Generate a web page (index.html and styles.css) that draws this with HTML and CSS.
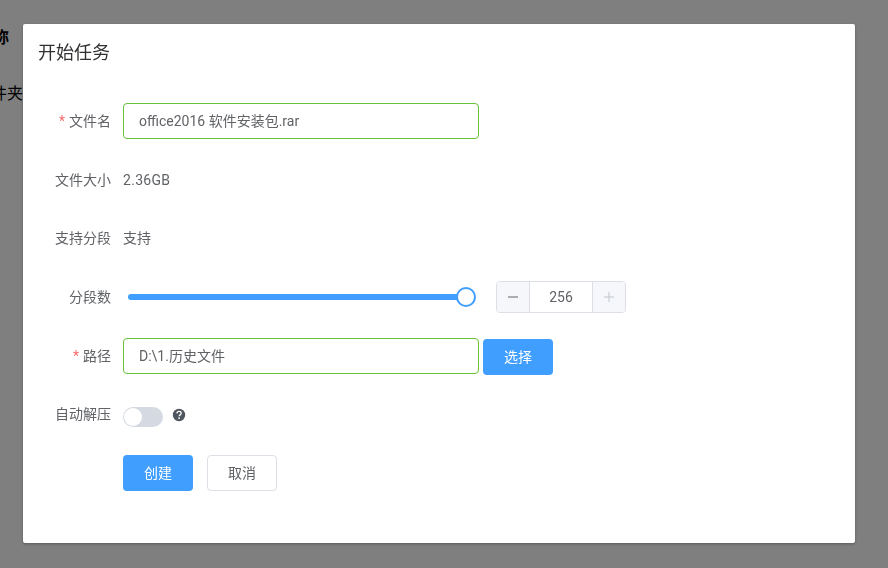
FILE: index.html
```html
<!DOCTYPE html>
<html lang="en">
  <head>
    <meta charset="UTF-8" />
    <meta name="viewport" content="width=device-width, initial-scale=1.0" />
    <title>开始任务</title>
    <link rel="stylesheet" href="styles.css">
  </head>
  <body>
    <div class="page-behind">
      <div class="behind-title">名称</div>
      <div class="behind-row">文件夹</div>
    </div>

    <div class="overlay"></div>

    <div class="dialog">
      <div class="dialog-header">开始任务</div>

      <form class="task-form">
        <div class="form-row">
          <label class="form-label"><span class="required">*</span>文件名</label>
          <input class="text-input" type="text" value="office2016 软件安装包.rar" />
        </div>

        <div class="form-row">
          <label class="form-label">文件大小</label>
          <span class="form-value form-size">2.36GB</span>
        </div>

        <div class="form-row">
          <label class="form-label">支持分段</label>
          <span class="form-value">支持</span>
        </div>

        <div class="form-row">
          <label class="form-label">分段数</label>
          <div class="slider">
            <div class="slider-track"></div>
            <div class="slider-handle"></div>
          </div>
          <div class="stepper">
            <span class="stepper-btn">
              <svg width="12" height="12" viewBox="0 0 12 12"><path d="M1 6h10" stroke="#606266" stroke-width="1" /></svg>
            </span>
            <span class="stepper-value">256</span>
            <span class="stepper-btn">
              <svg width="12" height="12" viewBox="0 0 12 12"><path d="M1 6h10M6 1v10" stroke="#c0c4cc" stroke-width="1" /></svg>
            </span>
          </div>
        </div>

        <div class="form-row path-row">
          <label class="form-label"><span class="required">*</span>路径</label>
          <input class="text-input" type="text" value="D:\1.历史文件" />
          <button type="button" class="btn btn-primary btn-pick">选择</button>
        </div>

        <div class="form-row">
          <label class="form-label">自动解压</label>
          <span class="switch"><span class="switch-knob"></span></span>
          <svg class="help-icon" width="14" height="14" viewBox="0 0 14 14">
            <circle cx="7" cy="7" r="6.2" fill="#4f5660" />
            <path d="M4.9 5.4c.1-1.3 1-2 2.2-2s2.1.7 2.1 1.8c0 .9-.5 1.3-1.1 1.7-.6.4-.9.7-.9 1.4" fill="none" stroke="#fff" stroke-width="1.3" />
            <circle cx="7.1" cy="10.2" r=".85" fill="#fff" />
          </svg>
        </div>

        <div class="form-row actions-row">
          <button type="button" class="btn btn-primary">创建</button>
          <button type="button" class="btn btn-default">取消</button>
        </div>
      </form>
    </div>
  </body>
</html>
```

FILE: styles.css
```css
:root {
  --primary-color: #409eff;
  --text-color: #606266;
  --title-color: #303133;
  --border-color: #dcdfe6;
  --success-color: #67c23a;
  --font-stack: Roboto, "Noto Sans CJK SC", sans-serif;
}

* {
  margin: 0;
  padding: 0;
  box-sizing: border-box;
}

html,
body {
  height: 100%;
  overflow: hidden;
}

body {
  font-family: var(--font-stack);
  background-color: white;
  color: var(--text-color);
}

/* page under the dialog, mostly hidden */
.page-behind {
  padding-top: 28px;
  color: black;
  font-size: 16px;
  line-height: 20px;
}

.behind-title {
  margin-left: -23px;
  font-weight: 700;
}

.behind-row {
  margin-top: 36px;
  margin-left: -25px;
}

.overlay {
  position: fixed;
  inset: 0;
  background-color: rgba(0, 0, 0, 0.5);
}

.dialog {
  position: fixed;
  left: 23px;
  top: 24px;
  width: 832px;
  height: 519px;
  background-color: white;
  border-radius: 2px;
  box-shadow: 0 1px 3px rgba(0, 0, 0, 0.3);
}

.dialog-header {
  padding: 16px 15px 0;
  font-size: 18px;
  line-height: 26px;
  color: var(--title-color);
}

.task-form {
  display: flex;
  flex-direction: column;
  gap: 22.7px;
  padding-top: 37px;
  padding-left: 100px;
}

.form-row {
  display: flex;
  align-items: center;
  height: 36px;
  font-size: 14px;
}

.form-label {
  width: 100px;
  margin-left: -100px;
  padding-right: 12px;
  padding-bottom: 2px;
  text-align: right;
  font-size: 14px;
}

.required {
  color: #f56c6c;
  margin-right: 4px;
}

.text-input {
  width: 356px;
  height: 36px;
  padding: 0 15px 2px;
  font-family: var(--font-stack);
  font-size: 14px;
  color: var(--text-color);
  border: 1px solid var(--success-color);
  border-radius: 4px;
  outline: 0;
}

.form-value {
  padding-bottom: 2px;
}

.form-size {
  padding-bottom: 0;
  letter-spacing: 0.3px;
}

.slider {
  position: relative;
  width: 338px;
  height: 20px;
  margin-left: 5px;
}

.slider-track {
  position: absolute;
  left: 0;
  right: 0;
  top: 7px;
  height: 6px;
  border-radius: 3px;
  background-color: var(--primary-color);
}

.slider-handle {
  position: absolute;
  right: -10px;
  top: 0;
  width: 20px;
  height: 20px;
  background-color: white;
  border: 2px solid var(--primary-color);
  border-radius: 50%;
}

.stepper {
  display: flex;
  width: 130px;
  height: 32px;
  margin-left: 30px;
  border: 1px solid var(--border-color);
  border-radius: 4px;
  overflow: hidden;
}

.stepper-btn {
  display: flex;
  justify-content: center;
  align-items: center;
  width: 32px;
  background-color: #f5f7fa;
}

.stepper-value {
  flex: 1;
  text-align: center;
  line-height: 30px;
  font-size: 14px;
  border-left: 1px solid var(--border-color);
  border-right: 1px solid var(--border-color);
}

.path-row {
  gap: 4px;
}

.path-row .form-label {
  margin-right: -4px;
}

.btn {
  width: 70px;
  height: 36px;
  padding-bottom: 2px;
  font-family: var(--font-stack);
  font-size: 14px;
  border-radius: 4px;
  border: 1px solid transparent;
  cursor: pointer;
}

.btn-pick {
  margin-top: 2px;
}

.btn-primary {
  color: white;
  background-color: var(--primary-color);
}

.btn-default {
  color: var(--text-color);
  background-color: white;
  border-color: var(--border-color);
}

.switch {
  position: relative;
  width: 40px;
  height: 20px;
  margin-top: 6px;
  border-radius: 10px;
  background-color: #d5dae2;
}

.switch-knob {
  position: absolute;
  left: 1px;
  top: 1px;
  width: 18px;
  height: 18px;
  border-radius: 50%;
  background-color: white;
}

.help-icon {
  margin-left: 9px;
  margin-top: 1px;
}

.actions-row {
  gap: 14px;
}
```
